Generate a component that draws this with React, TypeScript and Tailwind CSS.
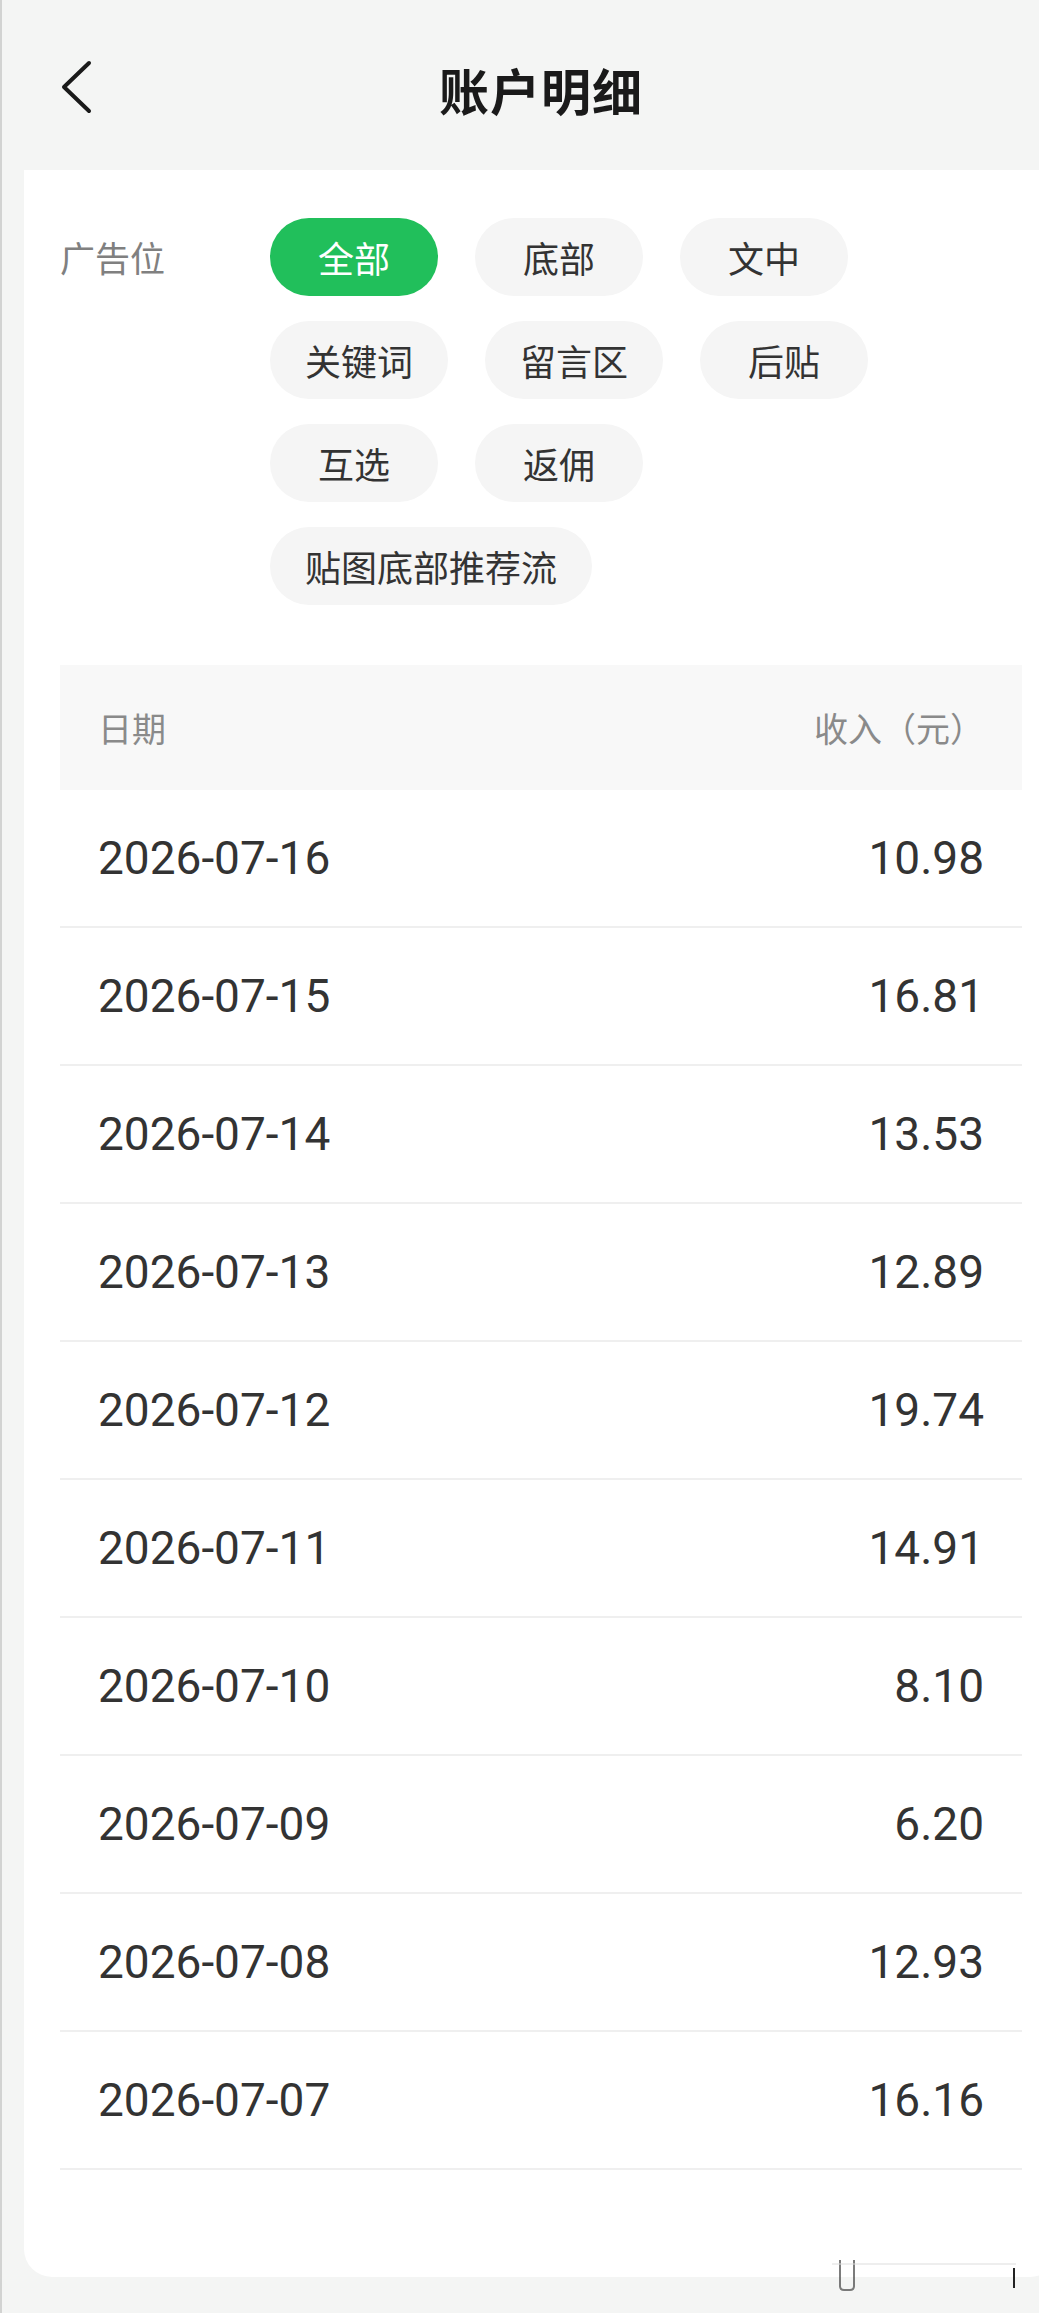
const chips = ['全部', '底部', '文中', '关键词', '留言区', '后贴', '互选', '返佣', '贴图底部推荐流'];

const rows = [
  ['2026-07-16', '10.98'],
  ['2026-07-15', '16.81'],
  ['2026-07-14', '13.53'],
  ['2026-07-13', '12.89'],
  ['2026-07-12', '19.74'],
  ['2026-07-11', '14.91'],
  ['2026-07-10', '8.10'],
  ['2026-07-09', '6.20'],
  ['2026-07-08', '12.93'],
  ['2026-07-07', '16.16'],
];

const cjk = "font-['Noto_Sans_CJK_SC',sans-serif]";

export default function App() {
  return (
    <div className={`relative w-[1039px] min-h-[2313px] overflow-hidden bg-[#f4f5f4] border-l-2 border-[#d2d3d2] ${cjk}`}>
      <div className="w-[1078px]">
        {/* top bar */}
        <header className="relative h-[170px] flex items-center justify-center pt-[8px]">
          <button className="absolute left-[55px] top-[57px]">
            <svg width="40" height="60" viewBox="0 0 40 60" fill="none">
              <path d="M32 6 L7 30 L32 54" stroke="#1a1a1a" strokeWidth="4" strokeLinecap="round" strokeLinejoin="round" />
            </svg>
          </button>
          <h1 className="text-[50px] font-bold text-[#1a1a1a] leading-none tracking-[1px]">账户明细</h1>
        </header>

        {/* card */}
        <div className="mx-[22px] bg-white rounded-b-[28px] pt-[48px] px-[36px] pb-[107px]">
          <div className="flex">
            <div className="w-[210px] shrink-0 h-[78px] flex items-center text-[35px] text-[#808080]">广告位</div>
            <div className="w-[700px] flex flex-wrap gap-x-[37px] gap-y-[25px]">
              {chips.map((c, i) => (
                <span
                  key={c}
                  className={
                    i === 0
                      ? 'h-[78px] min-w-[168px] px-[35px] rounded-full flex items-center justify-center text-[36px] bg-[#21bf5b] text-white'
                      : 'h-[78px] min-w-[168px] px-[35px] rounded-full flex items-center justify-center text-[36px] bg-[#f5f5f5] text-[#333333]'
                  }
                >
                  {c}
                </span>
              ))}
            </div>
          </div>

          <div className="mt-[60px]">
            <div className="h-[125px] bg-[#f8f8f8] px-[38px] flex items-center justify-between text-[34px] text-[#8a8a8a]">
              <span>日期</span>
              <span>收入（元）</span>
            </div>
            {rows.map(([d, v]) => (
              <div
                key={d}
                className="h-[138px] border-b-2 border-[#efefef] px-[38px] flex items-center justify-between text-[46px] text-[#333333] font-['Roboto',sans-serif]"
              >
                <span>{d}</span>
                <span>{v}</span>
              </div>
            ))}
          </div>
        </div>
      </div>

      {/* faint watermark remnant */}
      <svg className="absolute left-[830px] top-[2256px]" width="200" height="40" viewBox="0 0 200 40">
        <path d="M8 4 V30 Q8 34 12 34 H18 Q22 34 22 30 V4" fill="none" stroke="#444" strokeWidth="2" opacity="0.7" />
        <line x1="0" y1="8" x2="184" y2="8" stroke="#ddd" strokeWidth="1" />
        <line x1="182" y1="12" x2="182" y2="32" stroke="#222" strokeWidth="2" />
      </svg>
    </div>
  );
}
